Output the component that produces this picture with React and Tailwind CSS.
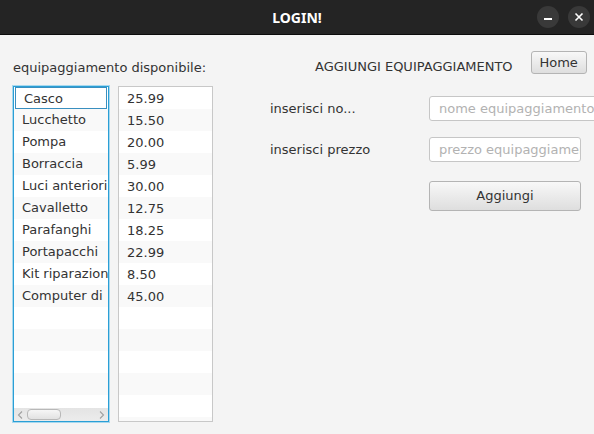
import React from "react";

const items = [
  ["Casco", "25.99"],
  ["Lucchetto", "15.50"],
  ["Pompa", "20.00"],
  ["Borraccia", "5.99"],
  ["Luci anteriori", "30.00"],
  ["Cavalletto", "12.75"],
  ["Parafanghi", "18.25"],
  ["Portapacchi", "22.99"],
  ["Kit riparazione", "8.50"],
  ["Computer di", "45.00"],
];

const rows = Array.from({ length: 16 }, (_, i) => items[i] || ["", ""]);

const font = { fontFamily: '"DejaVu Sans", sans-serif' };

const App = () => {
  return (
    <div
      className="w-[594px] h-[434px] bg-[#f4f4f4] flex flex-col overflow-hidden text-[13px] text-[#333333]"
      style={font}
    >
      {/* Title bar */}
      <div className="h-[35px] shrink-0 bg-[#242424] border-b border-[#0c0c0c] flex items-center">
        <div className="w-[64px]" />
        <div
          className="flex-1 text-center text-white font-bold text-[14px]"
          style={{ fontFamily: '"Noto Sans", sans-serif' }}
        >
          LOGIN!
        </div>
        <div className="w-[64px] flex items-center gap-[9px] pl-[7px]">
          <div className="w-[22px] h-[22px] rounded-full bg-[#393939] flex items-center justify-center">
            <div className="w-[8px] h-[2px] bg-white mt-[4px]" />
          </div>
          <div className="w-[22px] h-[22px] rounded-full bg-[#393939] flex items-center justify-center">
            <svg width="10" height="10" viewBox="0 0 10 10">
              <path d="M1.5 1.5 L8.5 8.5 M8.5 1.5 L1.5 8.5" stroke="white" strokeWidth="1.6" />
            </svg>
          </div>
        </div>
      </div>

      {/* Body */}
      <div className="flex flex-1">
        {/* Left column */}
        <div className="pl-[13px] pt-[25px] flex flex-col">
          <div className="leading-[16px] h-[16px]">equipaggiamento disponibile:</div>
          <div className="flex gap-[9px] mt-[10px]">
            {/* Name list */}
            <div className="w-[96px] h-[336px] border border-[#2a9fd6] shadow-[0_0_0_1px_#a8d8ee] bg-white flex flex-col overflow-hidden">
              <div className="flex-1 overflow-hidden">
                {rows.map((r, i) => (
                  <div
                    key={i}
                    className={`h-[22px] leading-[22px] pl-[8px] whitespace-nowrap overflow-hidden ${
                      i % 2 ? "bg-[#f9f9f9]" : "bg-white"
                    } ${i === 0 ? "border border-[#3a8fbf] pl-[7px] ml-[1px] mr-[1px] leading-[20px]" : ""}`}
                  >
                    {r[0]}
                  </div>
                ))}
              </div>
              {/* Horizontal scroll bar */}
              <div className="h-[13px] shrink-0 bg-gradient-to-b from-[#e4e4e4] to-[#ececec] flex items-center">
                <svg width="12" height="12" viewBox="0 0 12 12" className="ml-[1px]">
                  <path d="M7 2.5 L3.5 6 L7 9.5" stroke="#a0a0a0" strokeWidth="1.1" fill="none" />
                </svg>
                <div className="w-[34px] h-[11px] rounded-[4px] border border-[#b8b8b8] bg-gradient-to-b from-[#f6f6f6] to-[#e2e2e2]" />
                <div className="flex-1" />
                <svg width="12" height="12" viewBox="0 0 12 12" className="mr-[1px]">
                  <path d="M5 2.5 L8.5 6 L5 9.5" stroke="#a0a0a0" strokeWidth="1.1" fill="none" />
                </svg>
              </div>
            </div>
            {/* Price list */}
            <div className="w-[95px] h-[336px] border border-[#c8c8c8] bg-white overflow-hidden">
              {rows.map((r, i) => (
                <div
                  key={i}
                  className={`h-[22px] leading-[24px] pl-[8px] whitespace-nowrap ${
                    i % 2 ? "bg-[#f9f9f9]" : "bg-white"
                  }`}
                >
                  {r[1]}
                </div>
              ))}
            </div>
          </div>
        </div>

        {/* Right column */}
        <div className="ml-[57px] flex flex-col">
          <div className="flex items-start">
            <div className="ml-[45px] mt-[24px] leading-[16px]">AGGIUNGI EQUIPAGGIAMENTO</div>
            <button className="ml-[18px] mt-[16px] w-[56px] h-[23px] rounded-[3px] border border-[#b4b4b4] bg-gradient-to-b from-[#f8f8f8] to-[#dedede] text-[13px] text-[#333333] leading-[20px]">
              Home
            </button>
          </div>

          <div className="grid grid-cols-[159px_auto] items-center mt-[21px] gap-y-[16px]">
            <div className="leading-[16px]">inserisci no...</div>
            <div className="w-[175px] h-[25px] border border-[#c6c6c6] rounded-[3px] bg-white pl-[9px] leading-[23px] text-[#b2b2b2] whitespace-nowrap overflow-hidden">
              nome equipaggiamento
            </div>
            <div className="leading-[16px]">inserisci prezzo</div>
            <div className="w-[152px] h-[25px] border border-[#c6c6c6] rounded-[3px] bg-white pl-[9px] leading-[23px] text-[#b2b2b2] whitespace-nowrap overflow-hidden">
              prezzo equipaggiamento
            </div>
            <div />
            <button className="mt-[3px] w-[152px] h-[30px] rounded-[3px] border border-[#b4b4b4] bg-gradient-to-b from-[#f8f8f8] to-[#dedede] text-[13px] text-[#333333]">
              Aggiungi
            </button>
          </div>
        </div>
      </div>
    </div>
  );
};

export default App;
